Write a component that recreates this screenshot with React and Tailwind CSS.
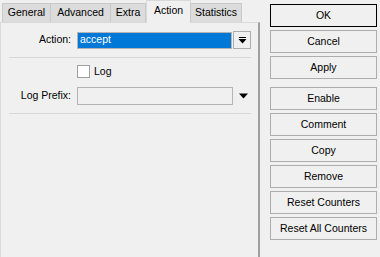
import React from "react";

const tabs = ["General", "Advanced", "Extra", "Action", "Statistics"];
const tabWidths = { General: 49, Advanced: 61, Extra: 36, Action: 45, Statistics: 52 };

const buttons = [
  ["OK", "Cancel", "Apply"],
  ["Enable", "Comment", "Copy", "Remove", "Reset Counters", "Reset All Counters"],
];

function Btn({ label, primary }) {
  return (
    <div
      className={`h-[23px] w-[107px] flex items-center justify-center border bg-[#f0f0f0] text-black ${
        primary ? "border-black" : "border-[#adadad]"
      }`}
    >
      {label}
    </div>
  );
}

function App() {
  return (
    <div
      className="w-[380px] h-[257px] overflow-hidden bg-[#f0f0f0] flex text-[10.5px] text-black"
      style={{ fontFamily: '"Liberation Sans", Arial, sans-serif' }}
    >
      {/* left: tabs + panel */}
      <div className="w-[260px] flex flex-col">
        <div className="h-[22px] flex items-end pl-[2px] relative z-10">
          {tabs.map((t) => {
            const active = t === "Action";
            return (
              <div
                key={t}
                style={{ width: tabWidths[t] }}
                className={
                  active
                    ? "h-[23px] -mb-[1px] bg-[#f0f0f0] border border-b-0 border-[#d9d9d9] flex items-center justify-center pb-[2px]"
                    : "h-[19px] bg-[#dcdcdc] border border-b-0 border-[#c9c9c9] -ml-[1px] first:ml-0 flex items-center justify-center"
                }
              >
                {t}
              </div>
            );
          })}
        </div>

        <div className="flex-1 border-t border-l border-[#d9d9d9] border-r-2 border-r-[#a0a0a0] flex flex-col pt-[8px]">
          {/* Action row */}
          <div className="flex items-center h-[18px]">
            <div className="w-[70px] text-right">Action:</div>
            <div className="ml-[6px] w-[155px] h-[17px] border border-[#b4b4b4] bg-[#0078d7] text-white flex items-center pl-[2px]">
              accept
            </div>
            <div className="ml-[1px] w-[18px] h-[18px] border border-[#adadad] bg-[#f0f0f0] flex items-center justify-center">
              <svg width="9" height="7" viewBox="0 0 9 7">
                <rect x="1" y="0" width="7" height="1" fill="#000" />
                <path d="M0.5 2 H8.5 L4.5 6.5 Z" fill="#000" />
              </svg>
            </div>
          </div>

          <div className="mt-[8px] ml-[8px] mr-[7px] h-px bg-[#d7d7d7]" />

          {/* Log checkbox */}
          <div className="mt-[7px] flex items-center h-[13px]">
            <div className="ml-[76px] w-[13px] h-[13px] border border-[#a0a0a0] bg-white" />
            <span className="ml-[4px]">Log</span>
          </div>

          {/* Log prefix */}
          <div className="mt-[9px] flex items-center h-[18px]">
            <div className="w-[70px] text-right">Log Prefix:</div>
            <div className="ml-[6px] w-[156px] h-[18px] border border-[#b4b4b4] bg-[#f0f0f0]" />
            <svg className="ml-[6px]" width="9" height="6" viewBox="0 0 9 6">
              <path d="M0 0.5 H9 L4.5 5.5 Z" fill="#000" />
            </svg>
          </div>

          <div className="mt-[8px] ml-[8px] mr-[7px] h-px bg-[#d7d7d7]" />
        </div>
      </div>

      {/* right: buttons */}
      <div className="pl-[10px] pt-[4px] flex flex-col">
        <div className="flex flex-col gap-[3px]">
          {buttons[0].map((b) => (
            <Btn key={b} label={b} primary={b === "OK"} />
          ))}
        </div>
        <div className="mt-[8px] flex flex-col gap-[3px]">
          {buttons[1].map((b) => (
            <Btn key={b} label={b} />
          ))}
        </div>
      </div>
    </div>
  );
}

export default App;
